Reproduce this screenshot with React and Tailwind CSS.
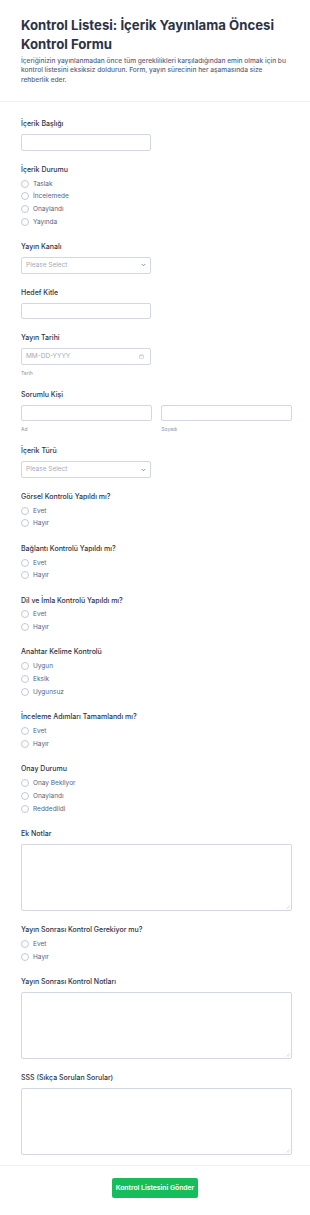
import React from "react";

function Label({ children }) {
  return <div className="text-[7px] leading-[10px] font-medium text-[#2c3345]">{children}</div>;
}

function SubLabel({ children }) {
  return <div className="mt-[5px] text-[5px] leading-[6px] text-[#8894ab]">{children}</div>;
}

function TextBox({ className = "w-[130px]" }) {
  return <div className={`mt-[5.3px] h-[16.4px] rounded-[2px] border border-[#d3d7e2] bg-white ${className}`} />;
}

function SelectBox() {
  return (
    <div className="mt-[5.3px] h-[16.4px] w-[130px] rounded-[2px] border border-[#d3d7e2] bg-white flex items-center justify-between pl-[4px] pr-[4px]">
      <span className="text-[6.5px] text-[#a3aabb]">Please Select</span>
      <svg width="5" height="4" viewBox="0 0 10 8" fill="none">
        <path d="M2 2.5 L5 5.5 L8 2.5" stroke="#6f7a93" strokeWidth="1.6" strokeLinecap="round" strokeLinejoin="round" />
      </svg>
    </div>
  );
}

function DateBox() {
  return (
    <div className="mt-[5.3px] h-[16.4px] w-[130px] rounded-[2px] border border-[#d3d7e2] bg-white flex items-center justify-between pl-[4px] pr-[6px]">
      <span className="text-[6.5px] text-[#a3aabb]">MM-DD-YYYY</span>
      <svg width="5" height="5" viewBox="0 0 10 10" fill="none">
        <rect x="1" y="1.8" width="8" height="7.4" rx="1" stroke="#b4bac8" strokeWidth="1" />
        <path d="M1 4 H9 M3.3 0.6 V2.6 M6.7 0.6 V2.6" stroke="#b4bac8" strokeWidth="1" />
      </svg>
    </div>
  );
}

function TextArea() {
  return (
    <div className="relative mt-[5.3px] w-[271px]">
      <textarea
        readOnly
        className="block h-[67px] w-full resize-none rounded-[2px] border border-[#d3d7e2] bg-white outline-none"
      />
      {/* resize grip */}
      <svg className="absolute right-[2px] bottom-[2px]" width="4" height="4" viewBox="0 0 8 8" fill="none">
        <path d="M7 1 L1 7 M7 4.5 L4.5 7" stroke="#c3c8d4" strokeWidth="1.2" />
      </svg>
    </div>
  );
}

function Radios({ options }) {
  return (
    <div className="mt-[2.6px] flex flex-col">
      {options.map((o) => (
        <div key={o} className="h-[12.75px] flex items-center gap-[4px]">
          <span className="w-[8px] h-[8px] rounded-full border border-[#c3c8d4] bg-white shrink-0" />
          <span className="text-[6.5px] leading-[8px] text-[#57647e]">{o}</span>
        </div>
      ))}
    </div>
  );
}

const yesNo = ["Evet", "Hayır"];

export default function App() {
  return (
    <div className="w-[310px] min-h-[1215px] bg-white font-['Inter',sans-serif]">
      <header className="px-[21px] pt-[16px] pb-[15.3px] border-b border-[#eef0f5]">
        <h1 className="text-[13.2px] leading-[19.3px] font-bold text-[#2c3345]">
          Kontrol Listesi: İçerik Yayınlama Öncesi Kontrol Formu
        </h1>
        <p className="mt-[2px] text-[6.6px] leading-[9.7px] font-medium text-[#57647e]">
          İçeriğinizin yayınlanmadan önce tüm gereklilikleri karşıladığından emin olmak için bu kontrol listesini
          eksiksiz doldurun. Form, yayın sürecinin her aşamasında size rehberlik eder.
        </p>
      </header>

      <form className="pl-[21px] pr-[18px] pt-[17px] pb-[10px] flex flex-col gap-[13.85px]">
        <div>
          <Label>İçerik Başlığı</Label>
          <TextBox />
        </div>
        <div>
          <Label>İçerik Durumu</Label>
          <Radios options={["Taslak", "İncelemede", "Onaylandı", "Yayında"]} />
        </div>
        <div>
          <Label>Yayın Kanalı</Label>
          <SelectBox />
        </div>
        <div>
          <Label>Hedef Kitle</Label>
          <TextBox />
        </div>
        <div>
          <Label>Yayın Tarihi</Label>
          <DateBox />
          <SubLabel>Tarih</SubLabel>
        </div>
        <div>
          <Label>Sorumlu Kişi</Label>
          <div className="flex gap-[9.6px]">
            <div className="flex-1">
              <TextBox className="w-full" />
              <SubLabel>Ad</SubLabel>
            </div>
            <div className="flex-1">
              <TextBox className="w-full" />
              <SubLabel>Soyadı</SubLabel>
            </div>
          </div>
        </div>
        <div>
          <Label>İçerik Türü</Label>
          <SelectBox />
        </div>
        <div>
          <Label>Görsel Kontrolü Yapıldı mı?</Label>
          <Radios options={yesNo} />
        </div>
        <div>
          <Label>Bağlantı Kontrolü Yapıldı mı?</Label>
          <Radios options={yesNo} />
        </div>
        <div>
          <Label>Dil ve İmla Kontrolü Yapıldı mı?</Label>
          <Radios options={yesNo} />
        </div>
        <div>
          <Label>Anahtar Kelime Kontrolü</Label>
          <Radios options={["Uygun", "Eksik", "Uygunsuz"]} />
        </div>
        <div>
          <Label>İnceleme Adımları Tamamlandı mı?</Label>
          <Radios options={yesNo} />
        </div>
        <div>
          <Label>Onay Durumu</Label>
          <Radios options={["Onay Bekliyor", "Onaylandı", "Reddedildi"]} />
        </div>
        <div>
          <Label>Ek Notlar</Label>
          <TextArea />
        </div>
        <div>
          <Label>Yayın Sonrası Kontrol Gerekiyor mu?</Label>
          <Radios options={yesNo} />
        </div>
        <div>
          <Label>Yayın Sonrası Kontrol Notları</Label>
          <TextArea />
        </div>
        <div>
          <Label>SSS (Sıkça Sorulan Sorular)</Label>
          <TextArea />
        </div>
      </form>

      <div className="border-t border-[#eef0f5] flex justify-center pt-[12px] pb-[17px]">
        <button
          type="button"
          className="w-[86px] h-[19.3px] rounded-[2px] bg-[#18bd5b] text-white text-[6.8px] font-semibold"
        >
          Kontrol Listesini Gönder
        </button>
      </div>
    </div>
  );
}
